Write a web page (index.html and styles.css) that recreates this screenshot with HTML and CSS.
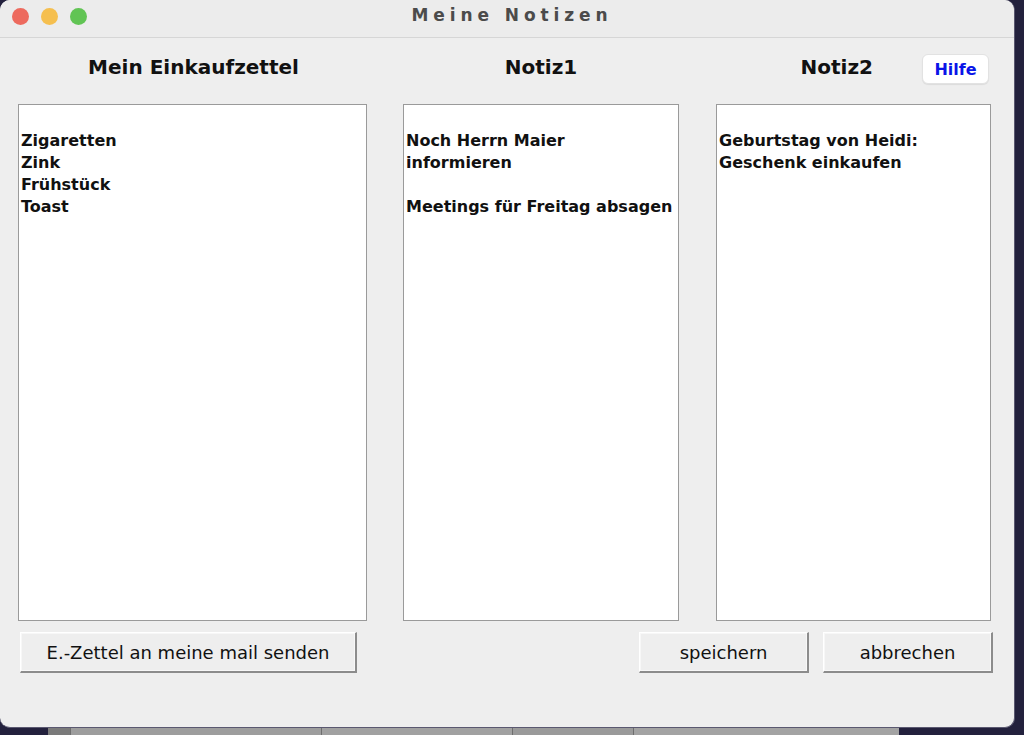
FILE: index.html
```html
<!DOCTYPE html>
<html>
<head>
  <title>Meine Notizen</title>
  <link rel="stylesheet" href="styles.css">
</head>
<body>
  <div class="window">
    <div class="titlebar">
      <div class="lights">
        <span class="light light-red"></span>
        <span class="light light-yellow"></span>
        <span class="light light-green"></span>
      </div>
      <div class="title">Meine Notizen</div>
    </div>

    <div class="content">
      <div class="columns">
        <div class="column col-wide">
          <div class="col-head">
            <h2 class="heading">Mein Einkaufzettel</h2>
          </div>
          <div class="note">
Zigaretten
Zink
Frühstück
Toast</div>
        </div>

        <div class="column">
          <div class="col-head">
            <h2 class="heading">Notiz1</h2>
          </div>
          <div class="note">
Noch Herrn Maier
informieren

Meetings für Freitag absagen</div>
        </div>

        <div class="column">
          <div class="col-head col-head-right">
            <h2 class="heading">Notiz2</h2>
            <button class="help-btn">Hilfe</button>
          </div>
          <div class="note">
Geburtstag von Heidi:
Geschenk einkaufen</div>
        </div>
      </div>

      <div class="actions">
        <button class="btn btn-mail">E.-Zettel an meine mail senden</button>
        <div class="actions-right">
          <button class="btn btn-small">speichern</button>
          <button class="btn btn-small">abbrechen</button>
        </div>
      </div>
    </div>
  </div>

  <div class="backwin">
    <span class="seg seg-dark"></span>
    <span class="seg seg-a"></span>
    <span class="seg seg-b"></span>
    <span class="seg seg-c"></span>
    <span class="seg seg-d"></span>
  </div>
</body>
</html>
```

FILE: styles.css
```css
html, body {
  margin: 0;
  padding: 0;
}

body {
  width: 1024px;
  height: 735px;
  overflow: hidden;
  background-color: #23213d;
  font-family: "DejaVu Sans", sans-serif;
}

.window {
  width: 1015px;
  height: 728px;
  background-color: #eeeeee;
  border-radius: 10px;
  box-sizing: border-box;
  border-right: 1px solid #5a5870;
  border-bottom: 1px solid #5a5870;
}

/* title bar */
.titlebar {
  height: 37px;
  border-bottom: 1px solid #d6d6d6;
  background-color: #ececec;
  border-radius: 10px 10px 0 0;
  display: flex;
  align-items: flex-start;
  position: relative;
}

.lights {
  display: flex;
  gap: 12px;
  padding-left: 12px;
  padding-top: 8px;
}

.light {
  width: 17px;
  height: 17px;
  border-radius: 50%;
  display: block;
}

.light-red { background-color: #ed6a5e; }
.light-yellow { background-color: #f5bf4f; }
.light-green { background-color: #61c454; }

.title {
  position: absolute;
  left: 0;
  right: 0;
  top: 5px;
  text-align: center;
  font-size: 17px;
  font-weight: bold;
  letter-spacing: 4.9px;
  color: #4b4b4b;
  padding-left: 10px;
}

/* main area */
.content {
  padding: 16px 0 0 18px;
}

.columns {
  display: grid;
  grid-template-columns: 349px 276px 276px;
  column-gap: 36px;
}

.column:nth-child(3) {
  margin-left: 1px;
}

.col-head {
  height: 30px;
  margin-bottom: 20px;
  display: flex;
  justify-content: center;
}

.col-head-right {
  justify-content: flex-end;
  gap: 49px;
  padding-right: 2px;
}

.heading {
  margin: 0;
  font-size: 20px;
  font-weight: bold;
  line-height: 26px;
  color: #111111;
}

.col-wide .heading {
  margin-left: 2px;
}

.help-btn {
  width: 67px;
  height: 30px;
  border: 1px solid #e2e2e2;
  border-radius: 6px;
  background-color: #ffffff;
  box-shadow: 0 1px 1px rgba(0, 0, 0, 0.08);
  font-family: "DejaVu Sans", sans-serif;
  font-size: 16px;
  font-weight: bold;
  color: #0a14e8;
  padding: 0;
}

.note {
  height: 517px;
  box-sizing: border-box;
  background-color: #ffffff;
  border: 1px solid #9a9a9a;
  padding: 3px 2px;
  white-space: pre;
  font-size: 16px;
  font-weight: bold;
  line-height: 22px;
  color: #111111;
  overflow: hidden;
}

/* buttons */
.actions {
  display: flex;
  justify-content: space-between;
  margin-top: 11px;
  padding-left: 2px;
  padding-right: 21px;
}

.actions-right {
  display: flex;
  gap: 14px;
}

.btn {
  height: 41px;
  box-sizing: border-box;
  background-color: #eeeeee;
  border-top: 1px solid #ffffff;
  border-left: 1px solid #ffffff;
  border-right: 2px solid #8c8c8c;
  border-bottom: 2px solid #8c8c8c;
  box-shadow: inset 0 0 0 1px #f7f7f7;
  font-family: "DejaVu Sans", sans-serif;
  font-size: 18px;
  color: #111111;
  padding: 0;
}

.btn-mail {
  width: 337px;
}

.btn-small {
  width: 170px;
}

/* window behind */
.backwin {
  display: flex;
  height: 7px;
  margin-left: 48px;
  width: 852px;
}

.seg {
  display: block;
  height: 100%;
  border-left: 1px solid #6e6e6e;
}

.seg-dark { width: 22px; background-color: #7a7a7a; border-left: none; }
.seg-a { width: 250px; background-color: #9d9d9d; }
.seg-b { width: 190px; background-color: #a1a1a1; }
.seg-c { width: 120px; background-color: #9a9a9a; }
.seg-d { width: 265px; background-color: #a3a3a3; }
```
